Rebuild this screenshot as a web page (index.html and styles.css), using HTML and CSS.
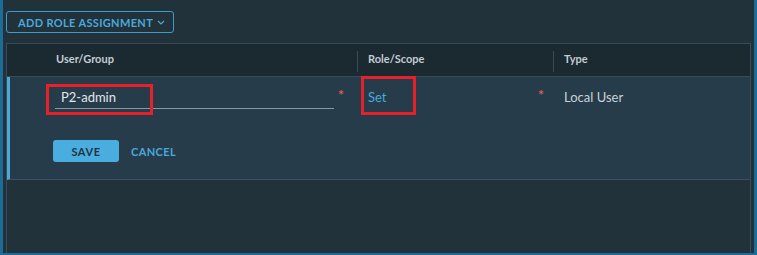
FILE: index.html
```html
<!DOCTYPE html>
<html lang="en">
<head>
    <meta charset="UTF-8">
    <title>Role Assignment</title>
    <link rel="stylesheet" href="styles.css">
</head>
<body>
    <div class="panel">
        <div class="toolbar">
            <button type="button" class="btn-outline">
                Add Role Assignment
                <svg class="chevron" width="8" height="5" viewBox="0 0 8 5"><path d="M1 1l3 3 3-3" fill="none" stroke="currentColor" stroke-width="1.2"/></svg>
            </button>
        </div>

        <div class="grid">
            <div class="grid-head">
                <div class="head-cell first">User/Group</div>
                <div class="head-cell">Role/Scope</div>
                <div class="head-cell">Type</div>
            </div>

            <!-- linha em edição -->
            <div class="grid-row editing">
                <div class="fields">
                    <div class="cell user">
                        <div class="input-line">P2-admin</div>
                        <span class="req">*</span>
                        <span class="mark mark-user"></span>
                    </div>
                    <div class="cell role">
                        <a class="link" href="#">Set</a>
                        <span class="req">*</span>
                        <span class="mark mark-role"></span>
                    </div>
                    <div class="cell type">Local User</div>
                </div>
                <div class="actions">
                    <button type="button" class="btn-primary">Save</button>
                    <button type="button" class="btn-link">Cancel</button>
                </div>
            </div>
        </div>
    </div>
</body>
</html>
```

FILE: styles.css
```css
* {
    box-sizing: border-box;
}

body {
    margin: 0;
    background-color: #21323a;
    font-family: Lato, "Noto Sans", Arial, sans-serif;
}

.panel {
    height: 255px;
    background-color: #21323a;
    border-left: 3px solid #1c6c96;
    border-right: 3px solid #1c6c96;
    border-bottom: 2px solid #1c6c96;
    padding: 11px 3px 0 3px;
    display: flex;
    flex-direction: column;
}

.toolbar {
    display: flex;
    height: 22px;
}

.btn-outline {
    display: flex;
    align-items: center;
    gap: 4px;
    height: 22px;
    width: 168px;
    padding: 0 0 0 11px;
    background: transparent;
    border: 1px solid #3e9ccb;
    border-radius: 3px;
    color: #4aa9da;
    font-family: inherit;
    font-size: 11px;
    font-weight: 700;
    letter-spacing: 0.35px;
    text-transform: uppercase;
    white-space: nowrap;
}

.chevron {
    margin-top: 1px;
}

.grid {
    flex: 1;
    margin-top: 10px;
    border: 1px solid #394b55;
    border-bottom: none;
    display: flex;
    flex-direction: column;
}

.grid-head {
    display: grid;
    grid-template-columns: 350px 196px 1fr;
    height: 33px;
    padding-top: 7px;
    background-color: #1b2931;
    border-bottom: 1px solid #394b55;
}

.head-cell {
    height: 21px;
    line-height: 16px;
    padding-left: 10px;
    border-left: 1px solid #3b4c56;
    color: #c3ccd1;
    font-size: 11px;
    font-weight: 700;
}

.head-cell.first {
    border-left: none;
    padding-left: 49px;
}

.grid-row {
    height: 103px;
    background-color: #263c4a;
    border-left: 3px solid #4aa9da;
    border-bottom: 1px solid #3d515d;
    padding-top: 10px;
}

.fields {
    display: grid;
    grid-template-columns: 347px 196px 1fr;
    height: 22px;
}

.cell {
    position: relative;
    display: flex;
    align-items: flex-start;
    line-height: 21px;
    font-size: 13px;
}

.cell.user {
    padding-left: 45px;
}

.input-line {
    width: 279px;
    height: 22px;
    padding-left: 6px;
    border-bottom: 1px solid #8796a0;
    color: #e2e6e9;
}

.req {
    color: #df5b53;
    font-size: 14px;
    font-weight: 700;
    line-height: 16px;
    margin-left: 4px;
}

.cell.role {
    padding-left: 11px;
}

.link {
    width: 166px;
    color: #4aa9da;
    text-decoration: none;
}

.cell.type {
    padding-left: 11px;
    color: #c9d1d6;
}

/* marcações vermelhas do print */
.mark {
    position: absolute;
    border: 3px solid #e8202a;
}

.mark-user {
    left: 36px;
    top: -3px;
    width: 107px;
    height: 31px;
}

.mark-role {
    left: 4px;
    top: -11px;
    width: 55px;
    height: 39px;
}

.actions {
    display: flex;
    align-items: center;
    gap: 12px;
    margin-top: 31px;
    padding-left: 43px;
}

.btn-primary {
    height: 22px;
    width: 66px;
    padding: 0;
    border: none;
    border-radius: 3px;
    background-color: #4aaddf;
    color: #1e3342;
    font-family: inherit;
    font-size: 11px;
    font-weight: 700;
    letter-spacing: 0.6px;
    text-transform: uppercase;
}

.btn-link {
    padding: 0;
    border: none;
    background: transparent;
    color: #4aa9da;
    font-family: inherit;
    font-size: 11px;
    font-weight: 700;
    letter-spacing: 0.4px;
    text-transform: uppercase;
}
```
